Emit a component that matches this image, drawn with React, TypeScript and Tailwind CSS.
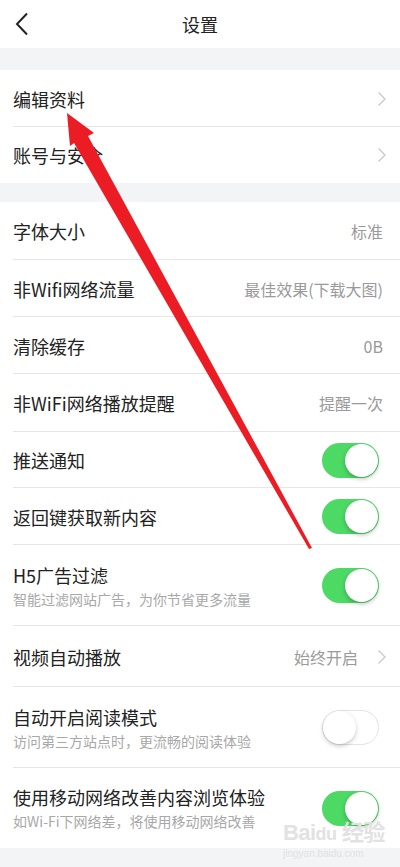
import React from 'react';

type RowProps = {
  title: string;
  subtitle?: string;
  value?: string;
  chevron?: boolean;
  toggle?: 'on' | 'off';
  height: string;
  divider?: boolean;
};

const Chevron = () => (
  <svg width="10" height="16" viewBox="0 0 10 16" className="shrink-0">
    <path d="M1.5 1.5 L8 8 L1.5 14.5" fill="none" stroke="#c8c8c8" strokeWidth="1.3" />
  </svg>
);

const Toggle = ({ on }: { on: boolean }) =>
  on ? (
    <div className="relative w-[57px] h-[35px] rounded-full bg-[#4cd964] shrink-0">
      <div className="absolute right-[1px] top-[1px] w-[33px] h-[33px] rounded-full bg-white shadow-[0_2px_4px_rgba(0,0,0,0.25)]" />
    </div>
  ) : (
    <div className="relative w-[57px] h-[35px] rounded-full bg-white border border-[#e3e3e3] shrink-0">
      <div className="absolute left-0 top-0 w-[33px] h-[33px] rounded-full bg-white shadow-[0_2px_4px_rgba(0,0,0,0.22)]" />
    </div>
  );

const Row = ({ title, subtitle, value, chevron, toggle, height, divider = true }: RowProps) => (
  <div className={`relative flex items-center pl-[13px] ${toggle ? 'pr-[21px]' : 'pr-[13px]'} ${height}`}>
    <div className="flex-1 flex flex-col">
      <span className="text-[18px] leading-[24px] text-[#222]">{title}</span>
      {subtitle && <span className="text-[14px] leading-[20px] mt-[2px] text-[#a8a8a8]">{subtitle}</span>}
    </div>
    {value && (
      <span className={`text-[16px] text-[#9a9a9a] ${chevron ? 'mr-[19px]' : 'mr-[4px]'}`}>{value}</span>
    )}
    {chevron && <Chevron />}
    {toggle && <Toggle on={toggle === 'on'} />}
    {divider && <div className="absolute left-[13px] right-0 bottom-0 h-px bg-[#e6e6e6]" />}
  </div>
);

export default function App() {
  return (
    <div
      className="relative w-[400px] h-[867px] overflow-hidden bg-[#f3f4f6]"
      style={{ fontFamily: '"Noto Sans CJK SC", "Noto Sans", sans-serif' }}
    >
      {/* header */}
      <div className="relative h-[48px] bg-white flex items-center justify-center">
        <svg width="14" height="24" viewBox="0 0 14 24" className="absolute left-[15px] top-[12px]">
          <path d="M12 1.5 L2 12 L12 22.5" fill="none" stroke="#222" strokeWidth="2" />
        </svg>
        <span className="text-[18px] text-[#222]">设置</span>
      </div>

      <div className="h-[22px]" />

      <div className="bg-white">
        <Row title="编辑资料" chevron height="h-[57px]" />
        <Row title="账号与安全" chevron height="h-[56px]" divider={false} />
      </div>

      <div className="h-[19px]" />

      <div className="bg-white">
        <Row title="字体大小" value="标准" height="h-[58px]" />
        <Row title="非Wifi网络流量" value="最佳效果(下载大图)" height="h-[57px]" />
        <Row title="清除缓存" value="0B" height="h-[57px]" />
        <Row title="非WiFi网络播放提醒" value="提醒一次" height="h-[58px]" />
        <Row title="推送通知" toggle="on" height="h-[56px]" />
        <Row title="返回键获取新内容" toggle="on" height="h-[57px]" />
        <Row title="H5广告过滤" subtitle="智能过滤网站广告，为你节省更多流量" toggle="on" height="h-[81px]" />
        <Row title="视频自动播放" value="始终开启" chevron height="h-[61px]" />
        <Row title="自动开启阅读模式" subtitle="访问第三方站点时，更流畅的阅读体验" toggle="off" height="h-[81px]" />
        <Row title="使用移动网络改善内容浏览体验" subtitle="如Wi-Fi下网络差，将使用移动网络改善" toggle="on" height="h-[80px]" divider={false} />
      </div>

      {/* watermark */}
      <div className="absolute left-[283px] top-[822px] flex flex-col items-start text-[#e2e2e2] pointer-events-none">
        <span className="text-[22px] leading-[22px] font-bold tracking-tight" style={{ fontFamily: '"Liberation Sans", "Noto Sans CJK SC", sans-serif' }}>
          Bai<span className="text-[18px]">du</span> 经验
        </span>
        <span className="text-[10px] leading-[12px] mt-[3px]" style={{ fontFamily: '"Liberation Sans", sans-serif' }}>jingyan.baidu.com</span>
      </div>

      {/* red annotation arrow */}
      <svg className="absolute left-0 top-0 pointer-events-none" width="400" height="867" viewBox="0 0 400 867">
        <polygon
          points="67,113 94,133 88,136 312,548 309,549 74,143 70,146"
          fill="#ec1c24"
        />
      </svg>
    </div>
  );
}
